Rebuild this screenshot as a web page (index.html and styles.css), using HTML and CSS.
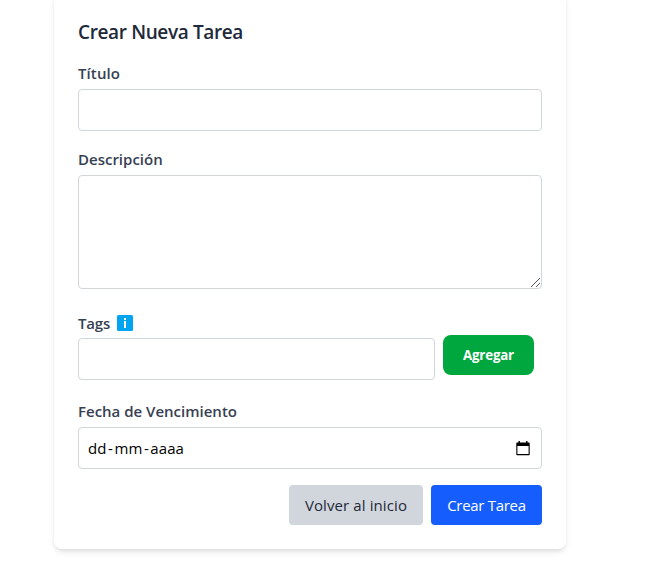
FILE: index.html
```html
<!DOCTYPE html>
<html lang="es">
<head>
<meta charset="utf-8">
<title>Crear Nueva Tarea</title>
<link rel="stylesheet" href="styles.css">
</head>
<body>
<form class="card">
  <h2 class="title">Crear Nueva Tarea</h2>
  <div class="field">
    <label class="label l-titulo" for="titulo">Título</label>
    <input class="control" id="titulo" type="text">
  </div>
  <div class="field field-desc">
    <label class="label" for="desc">Descripción</label>
    <textarea class="control area" id="desc"></textarea>
    <svg class="grip" width="9" height="9" viewBox="0 0 9 9" shape-rendering="crispEdges" fill="#555"><path d="M0 8h1v1H0zM1 7h1v1H1zM2 6h1v1H2zM3 5h1v1H3zM4 4h1v1H4zM5 3h1v1H5zM6 2h1v1H6zM7 1h1v1H7zM8 0h1v1H8zM5 8h1v1H5zM6 7h1v1H6zM7 6h1v1H7zM8 5h1v1H8z"/></svg>
  </div>
  <div class="field field-tags">
    <label class="label tags-label" for="tags"><span>Tags</span>
      <svg width="16" height="16" viewBox="0 0 16 16"><rect width="16" height="16" rx="1.5" fill="#00a4ef"/><path d="M7 3h2v2H7zM7 6h2v7H7z" fill="#fff"/></svg>
    </label>
    <div class="tag-row">
      <input class="control" id="tags" type="text">
      <button class="add" type="button">Agregar</button>
    </div>
  </div>
  <div class="field">
    <div class="label">Fecha de Vencimiento</div>
    <div class="control date">
      <span class="date-text">dd<i>-</i>mm<i>-</i>aaaa</span>
      <svg width="14" height="15" viewBox="0 0 14 15"><path d="M2.500 0h1.400v1.500h6.200V0h1.400v1.500H13q.7 0 .7 1V13.500q0 .7-.7.7H1q-.7 0-.7-.7V2.500q0-1 .7-1h1.500zM1.400 5v8.100h11.200V5z" fill="#000" fill-rule="evenodd"/></svg>
    </div>
  </div>
  <div class="actions">
    <button class="btn back" type="button">Volver al inicio</button>
    <button class="btn create" type="button">Crear Tarea</button>
  </div>
</form>
</body>
</html>
```
FILE: styles.css
```css
* { box-sizing: border-box; }
body {
  margin: 0;
  min-height: 586px;
  display: flex;
  align-items: flex-start;
  background: #fff;
  font-family: "Open Sans", "Noto Sans", sans-serif;
  font-size: 15px;
  line-height: 24px;
  overflow: hidden;
}
.card {
  width: 512px;
  height: 557px;
  margin: -8px 0 0 54px;
  padding: 26px 24px 24px;
  border-radius: 8px;
  box-shadow: 0 4px 6px -1px rgba(0,0,0,.1), 0 2px 4px -2px rgba(0,0,0,.1);
}
.title {
  margin: 0 0 15px;
  font-size: 19px;
  line-height: 28px;
  font-weight: 600;
  color: #1e2939;
  letter-spacing: -.37px;
}
.field { margin-bottom: 16px; }
.label {
  display: block;
  height: 24px;
  margin-bottom: 4px;
  font-weight: 550;
  color: #364153;
}
.l-titulo { letter-spacing: .1px; }
.control {
  display: block;
  width: 100%;
  height: 42px;
  margin: 0;
  padding: 8px;
  border: 1px solid #d1d5dc;
  border-radius: 4px;
  background: #fff;
  outline: none;
}
.area { height: 114px; resize: none; }
.field-desc { position: relative; margin-bottom: 22px; }
.grip { position: absolute; right: 2px; bottom: 2px; }
.tags-label { display: flex; align-items: center; gap: 7px; margin-bottom: 0; letter-spacing: -.2px; }
.field-tags { margin-bottom: 19px; }
.tag-row { display: flex; align-items: flex-start; gap: 8px; height: 45px; }
.tag-row .control { width: 357px; margin-top: 3px; }
.add {
  width: 91px;
  height: 40px;
  padding: 0;
  border: 0;
  border-radius: 8px;
  background: #00a63e;
  color: #fff;
  font: 700 13.333px/20px "Open Sans", sans-serif;
  letter-spacing: -.2px;
}
.date { display: flex; align-items: center; justify-content: space-between; padding: 0 11px 0 9px; }
.date-text { color: #000; letter-spacing: .08px; }
.date-text i { font-style: normal; padding: 0 1.500px; }
.actions { display: flex; justify-content: flex-end; gap: 8px; }
.btn {
  height: 40px;
  padding: 0;
  border: 0;
  border-radius: 4px;
  font: 400 15px/24px "Open Sans", sans-serif;
  white-space: nowrap;
}
.back { width: 134px; background: #d1d5dc; color: #1e2939; letter-spacing: .1px; }
.create { width: 111px; background: #155dfc; color: #fff; letter-spacing: -.3px; }
```
